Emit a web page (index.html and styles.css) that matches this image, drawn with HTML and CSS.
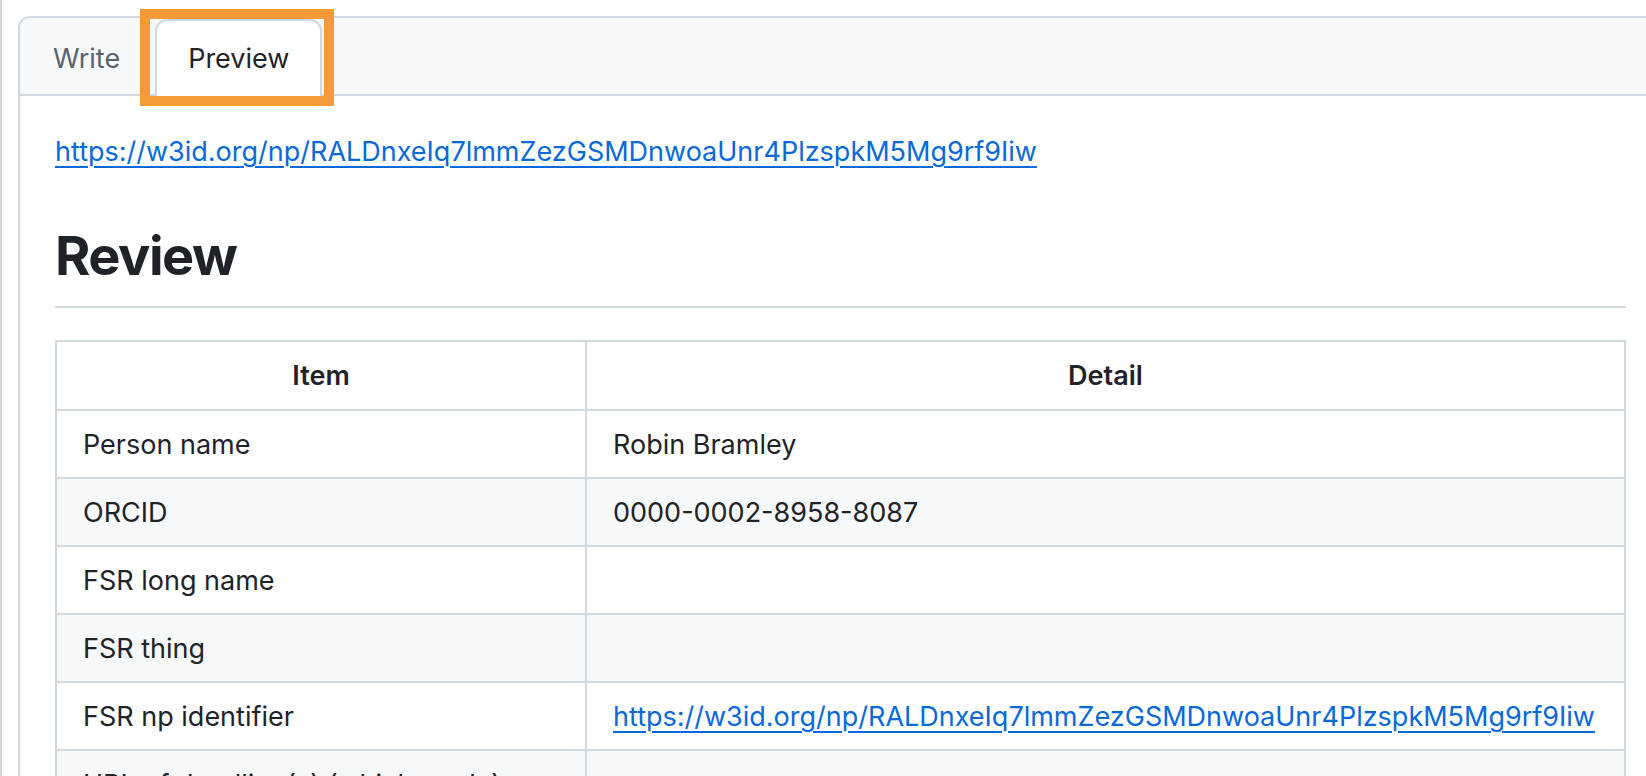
FILE: index.html
```html
<!DOCTYPE html>
<html>
<head>
<meta charset="utf-8">
<title>Preview</title>
<link rel="stylesheet" href="styles.css">
</head>
<body>
<div class="page">
  <div class="editor">
    <div class="tabnav">
      <button class="tab">Write</button>
      <button class="tab tab-selected">Preview</button>
    </div>
    <div class="preview">
      <p><a href="#">https://w3id.org/np/RALDnxeIq7lmmZezGSMDnwoaUnr4PlzspkM5Mg9rf9Iiw</a></p>
      <h2>Review</h2>
      <table>
        <colgroup><col class="col-item"><col></colgroup>
        <thead>
          <tr><th>Item</th><th>Detail</th></tr>
        </thead>
        <tbody>
          <tr><td>Person name</td><td>Robin Bramley</td></tr>
          <tr><td>ORCID</td><td>0000-0002-8958-8087</td></tr>
          <tr><td>FSR long name</td><td></td></tr>
          <tr><td>FSR thing</td><td></td></tr>
          <tr><td>FSR np identifier</td><td><a href="#">https://w3id.org/np/RALDnxeIq7lmmZezGSMDnwoaUnr4PlzspkM5Mg9rf9Iiw</a></td></tr>
          <tr><td>URL of deadline(s) (which apply)</td><td></td></tr>
        </tbody>
      </table>
    </div>
  </div>
  <div class="highlight"></div>
</div>
</body>
</html>
```

FILE: styles.css
```css
html, body {
  margin: 0;
  padding: 0;
  overflow: hidden;
  background: #ffffff;
}

body {
  width: 1646px;
  height: 776px;
  font-family: Inter, "Liberation Sans", sans-serif;
  color: #1f2328;
}

.page {
  position: relative;
  box-sizing: border-box;
  height: 776px;
  border-left: 2px solid #d0d7de;
  padding: 16px 0 0 16px;
}

.editor {
  width: 1641px;
  border: 2px solid #d0d7de;
  border-bottom: 0;
  border-radius: 12px 12px 0 0;
}

.tabnav {
  display: flex;
  align-items: flex-end;
  height: 76px;
  background: #f6f8fa;
  border-bottom: 2px solid #d0d7de;
  border-radius: 10px 10px 0 0;
}

.tab {
  display: flex;
  align-items: center;
  box-sizing: border-box;
  height: 77px;
  margin: 0 0 -2px 0;
  padding: 0 31px;
  border: 2px solid transparent;
  border-bottom: 0;
  border-radius: 12px 12px 0 0;
  background: transparent;
  font-family: inherit;
  font-size: 27px;
  line-height: 1;
  color: #59636e;
}

.tab-selected {
  margin-left: 2px;
  background: #ffffff;
  border-color: #d0d7de;
  color: #1f2328;
}

.preview {
  padding: 35px 35px 0;
  font-size: 27px;
  line-height: 42px;
}

.preview p {
  margin: 0;
}

.preview a {
  color: #0969da;
  text-decoration: underline;
  text-decoration-thickness: 2px;
  text-underline-offset: 5px;
}

.preview h2 {
  margin: 49px 0 32px;
  padding-bottom: 16px;
  border-bottom: 2px solid #d1d9e0;
  font-size: 54px;
  font-weight: 700;
  line-height: 1.25;
  letter-spacing: -1.5px;
}

.preview table {
  width: 100%;
  border-collapse: collapse;
  table-layout: fixed;
}

.col-item {
  width: 530px;
}

.preview th,
.preview td {
  height: 42px;
  padding: 13px 26px 11px;
  border: 2px solid #d1d9e0;
  font-size: 27px;
  line-height: 42px;
  text-align: left;
  white-space: nowrap;
}

.preview th {
  padding-bottom: 12px;
  text-align: center;
  font-weight: 600;
}

.preview tbody tr:nth-child(2n) {
  background: #f6f8fa;
}

.highlight {
  position: absolute;
  left: 138px;
  top: 9px;
  box-sizing: border-box;
  width: 194px;
  height: 97px;
  border: 10px solid #f29b38;
}
```
